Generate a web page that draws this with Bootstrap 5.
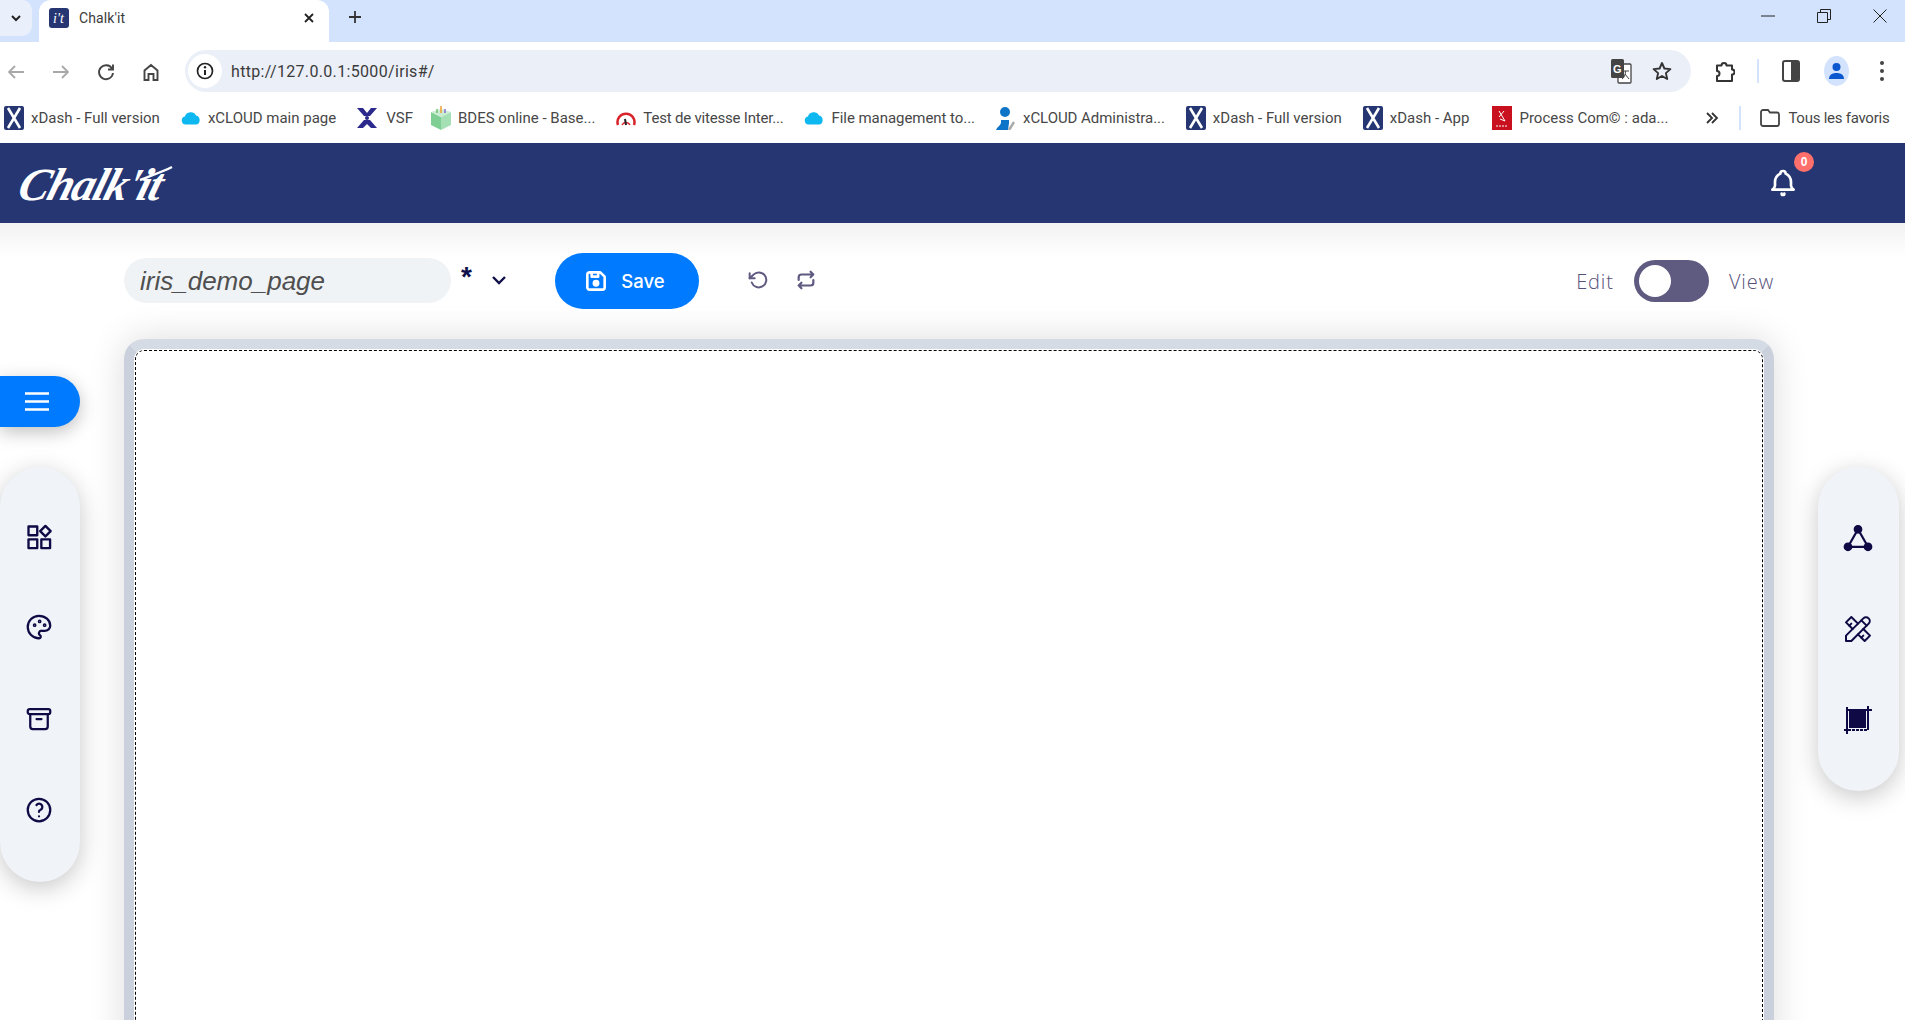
<!DOCTYPE html>
<html lang="en">
<head>
  <meta charset="UTF-8">
  <meta name="viewport" content="width=device-width, initial-scale=1.0">
  <title>Chalk'it</title>
  <link href="https://cdn.jsdelivr.net/npm/bootstrap@5.3.3/dist/css/bootstrap.min.css" rel="stylesheet">
  <style>
    html, body { height: 100%; overflow: hidden; background: #fff; }
    body { font-family: "Liberation Sans", sans-serif; }
    .page-root { height: 1020px; overflow: hidden; }

    /* browser chrome */
    .chrome-tabs { height: 42px; background: #d3e3fd; color: #3c3c3c; }
    .tab-list-btn { width: 32px; height: 36px; background: #e9f0fc; border-radius: 0 10px 10px 0; }
    .browser-tab { width: 290px; height: 42px; margin-left: 7px; padding: 0 14px 7px 10px; background: #fff; border-radius: 12px 12px 0 0; font: 14px Roboto, sans-serif; }
    .tab-title { margin-left: 10px; letter-spacing: .1px; }
    .new-tab { margin: 5px 0 0 18px; }
    .win-btns { gap: 42px; padding: 9px 18px 0 0; }
    .chrome-toolbar { height: 50px; padding: 8px 0 0 6px; background: #fff; }
    .nav-icons { width: 179px; gap: 25px; padding-left: 0; }
    .addr-bar { width: 1506px; height: 42px; background: #ebeff8; border-radius: 21px; padding: 0 19px 0 3px; font: 16px Roboto, sans-serif; color: #3b3b3b; }
    .site-info { width: 34px; height: 34px; background: #fff; border-radius: 50%; }
    .addr-url { margin-left: 9px; letter-spacing: .33px; }
    .addr-tools { gap: 20px; }
    .tool-icons { margin: 6px 0 0 24px; }
    .chrome-sep { width: 2px; height: 24px; background: #d3e3fd; }
    .tool-sep { margin: 0 23px 0 22px; }
    .profile-dot { width: 25px; height: 30px; margin: 0 30px 0 24px; background: #d3e3fd; border-radius: 50%; }
    .chrome-bookmarks { height: 51px; padding-left: 4px; background: #fff; font: 15px Roboto, sans-serif; color: #474747; white-space: nowrap; }
    .bm-item { gap: 7px; margin-right: 21px; }
    .bm-short { gap: 9px; margin-right: 18px; }
    .bm-wide { margin-right: 23px; }
    .bm-tight { letter-spacing: -.2px; }
    .bm-tighter { letter-spacing: -.05px; }
    .bm-more { margin-left: 16px; }
    .bm-sep { margin: 0 19px 0 20px; }
    .bm-all { gap: 8px; letter-spacing: -.25px; }

    /* app header */
    .app-header { height: 80px; padding: 0 !important; background: #253672; }
    .app-logo { margin-left: 20px; padding-top: 4px; position: relative; }
    .logo-text { font: italic 700 46px "Liberation Serif", serif; color: #fff; letter-spacing: -1.5px; transform: skewX(-16deg); display: inline-block; line-height: 1; }
    .logo-bar { position: absolute; left: 118px; top: 6px; }
    .bell-wrap { position: relative; margin-right: 106px; width: 32px; height: 32px; }
    .bell-count { position: absolute; top: -15px; left: 27px; width: 20px; height: 20px; padding: 0; border-radius: 50%; background: #ff6f6c; font: 700 12px/20px "Liberation Sans", sans-serif; color: #fff; }

    /* app body */
    .app-body { background: linear-gradient(#f2f2f2, #fff 34px); height: 777px; }
    .page-toolbar { height: 116px; padding: 30px 0 0 124px; }
    .page-name { width: 327px; height: 45px; margin-top: 5px; padding: 2px 16px 0; border: 0; border-radius: 23px; background: #f0f3f6; font: italic 26px "Liberation Sans", sans-serif; color: #4f4f4f; box-shadow: none !important; }
    .page-name:focus { background: #f0f3f6; color: #4f4f4f; }
    .dirty-star { margin: 0 0 0 10px; width: 20px; font: 700 28px/28px "Liberation Sans", sans-serif; color: #10104a; align-self: flex-start; padding-top: 10px; }
    .page-menu { margin: 14px 0 0 10px; }
    .save-btn { width: 144px; height: 56px; margin-left: 48px; padding: 0 6px 0 0; gap: 12px; border: 0; background: #007bff; font: 500 18.5px Inter, sans-serif; color: #fff; }
    .undo-redo { margin: 16px 0 0 49px; gap: 27px; color: #5f5a80; }
    .mode-switch { margin: 7px 131px 0 auto; font: 300 20px "Open Sans", sans-serif; color: #56517a; gap: 20px; letter-spacing: .9px; }
    .mode-track { width: 75px; height: 42px; border-radius: 21px; background: #5f5a80; padding: 5px; }
    .mode-knob { width: 32px; height: 32px; border-radius: 50%; background: #fff; }

    .work-row { height: 700px; }
    .left-rail { width: 124px; flex: none; }
    .right-rail { width: 131px; flex: none; padding: 128px 6px 0 44px; }
    .menu-pill { width: 80px; height: 51px; margin-top: 37px; padding-right: 7px; border-radius: 0 26px 26px 0; background: #007bff; box-shadow: 0 5px 18px rgba(0, 0, 0, .25); }
    .tool-panel { background: #f0f3f7; border-radius: 40px; box-shadow: 0 6px 24px rgba(0, 0, 0, .22); color: #0f0a45; }
    .panel-left { width: 80px; height: 415px; margin-top: 40px; padding: 56px 2px 57px 0; }
    .panel-right { width: 81px; height: 324px; padding: 56px 2px 56px 0; }
    .canvas-frame { width: 1650px; height: 760px; flex: none; border: 10px solid #d5dbe4; border-left-color: #cbd1dc; border-right-color: #cbd1dc; border-radius: 20px 20px 0 0; background: #fff; box-shadow: 0 0 36px rgba(0, 0, 0, .14); }
    .canvas-inner { height: 100%; margin: 1px 1px 0 1px; border: 1px dashed #000; border-bottom: 0; border-radius: 9px 9px 0 0; background: #fff; }
  </style>
</head>
<body>
  <svg width="0" height="0" class="d-block">
    <symbol id="xlogo" viewBox="0 0 20 24">
      <rect width="20" height="24" rx="2" fill="#253672"/>
      <path d="M4 2l12 20M16 2L4 22" stroke="#fff" stroke-width="2.6" fill="none"/>
    </symbol>
    <symbol id="cloud" viewBox="0 0 20 14">
      <path d="M4.5 13.5a4 4 0 0 1-.6-7.9A6 6 0 0 1 15 4.6a4.6 4.6 0 0 1 .4 8.9z" fill="#0db7f0"/>
    </symbol>
  </svg>

  <div class="page-root">
    <!-- browser tabs -->
    <div class="chrome-tabs d-flex align-items-start">
      <div class="tab-list-btn d-flex align-items-center justify-content-center">
        <svg width="12" height="12" viewBox="0 0 12 12"><path d="M2 4l4 4 4-4" fill="none" stroke="#222" stroke-width="2"/></svg>
      </div>
      <div class="browser-tab d-flex align-items-center">
        <svg width="20" height="20" viewBox="0 0 20 20">
          <rect width="20" height="20" rx="3" fill="#253672"/>
          <text x="4" y="15" font-family="Liberation Serif" font-style="italic" font-size="14" fill="#fff">i't</text>
        </svg>
        <span class="tab-title flex-grow-1">Chalk'it</span>
        <svg width="12" height="12" viewBox="0 0 12 12"><path d="M2 2l8 8M10 2l-8 8" stroke="#222" stroke-width="1.8"/></svg>
      </div>
      <svg class="new-tab" width="16" height="24" viewBox="0 0 16 24"><path d="M8 6v12M2 12h12" stroke="#333" stroke-width="1.8"/></svg>
      <div class="win-btns d-flex align-items-center ms-auto">
        <svg width="14" height="14" viewBox="0 0 14 14"><path d="M0 7h14" stroke="#222"/></svg>
        <svg width="14" height="14" viewBox="0 0 14 14"><path d="M.5 3.5h10v10H.5zM3.5 3V.5h10v10H11" fill="none" stroke="#222"/></svg>
        <svg width="14" height="14" viewBox="0 0 14 14"><path d="M.5.5l13 13M13.5.5l-13 13" stroke="#222"/></svg>
      </div>
    </div>

    <!-- address bar -->
    <div class="chrome-toolbar d-flex align-items-start">
      <div class="nav-icons d-flex align-items-center mt-2 pt-1">
        <svg width="20" height="20" viewBox="0 0 20 20"><path d="M18 10H3M9 4l-6 6 6 6" fill="none" stroke="#a8a8a8" stroke-width="1.8"/></svg>
        <svg width="20" height="20" viewBox="0 0 20 20"><path d="M2 10h15M11 4l6 6-6 6" fill="none" stroke="#a8a8a8" stroke-width="1.8"/></svg>
        <svg width="20" height="20" viewBox="0 0 20 20"><path d="M16 6.5A7 7 0 1 0 17 11M17 2.5v5h-5" fill="none" stroke="#444" stroke-width="1.9"/></svg>
        <svg width="20" height="20" viewBox="0 0 20 20"><path d="M3.5 18V8.500L10 3l6.500 5.500V18H12.500v-6h-5v6z" fill="none" stroke="#444" stroke-width="1.9"/></svg>
      </div>
      <div class="addr-bar d-flex align-items-center">
        <span class="site-info d-flex align-items-center justify-content-center">
          <svg width="18" height="18" viewBox="0 0 18 18"><circle cx="9" cy="9" r="7.500" fill="none" stroke="#222" stroke-width="1.700"/><path d="M9 8v5" stroke="#222" stroke-width="2"/><circle cx="9" cy="5.300" r="1.200" fill="#222"/></svg>
        </span>
        <span class="addr-url flex-grow-1">http://127.0.0.1:5000/iris#/</span>
        <span class="addr-tools d-flex align-items-center">
          <svg width="22" height="26" viewBox="0 0 22 26">
            <rect x="8" y="6" width="13" height="19" rx="1" fill="#fff" stroke="#444" stroke-width="1.300"/>
            <rect x="1" y="1" width="13" height="19" rx="1.500" fill="#444"/>
            <text x="3" y="15" font-family="Liberation Sans" font-weight="700" font-size="11" fill="#fff">G</text>
            <path d="M12 13h7M15.500 13c0 4-1.500 7-3.500 8M15 16l4 5" fill="none" stroke="#444"/>
          </svg>
          <svg width="20" height="20" viewBox="0 0 20 20"><path d="M10 2l2.400 5.500 6 .6-4.500 4 1.300 5.900L10 15l-5.200 3 1.300-5.900-4.500-4 6-.6z" fill="none" stroke="#333" stroke-width="1.900" stroke-linejoin="round"/></svg>
        </span>
      </div>
      <div class="tool-icons d-flex align-items-center">
        <svg width="20" height="26" viewBox="0 0 20 26"><path d="M2 7.500h4.500a2.500 2.500 0 0 1 5 0H17v4a2.500 2.500 0 0 1 0 5V23H2v-5a2.500 2.500 0 0 0 0-5z" fill="none" stroke="#333" stroke-width="2" stroke-linejoin="round"/></svg>
        <span class="chrome-sep tool-sep"></span>
        <svg width="18" height="22" viewBox="0 0 18 22"><rect x="1" y="1" width="16" height="20" rx="2" fill="none" stroke="#444" stroke-width="2"/><rect x="9" y="1" width="8" height="20" rx="1" fill="#444"/></svg>
        <span class="profile-dot d-flex align-items-center justify-content-center">
          <svg width="17" height="18" viewBox="0 0 17 18"><circle cx="8.500" cy="5" r="4" fill="#0b57d0"/><path d="M1 17c0-4 3-6 7.500-6s7.500 2 7.500 6z" fill="#0b57d0"/></svg>
        </span>
        <svg width="6" height="22" viewBox="0 0 6 22"><circle cx="3" cy="3" r="2" fill="#444"/><circle cx="3" cy="11" r="2" fill="#444"/><circle cx="3" cy="19" r="2" fill="#444"/></svg>
      </div>
    </div>

    <!-- bookmarks -->
    <div class="chrome-bookmarks d-flex align-items-center">
      <div class="bm-item d-flex align-items-center"><svg width="20" height="24"><use href="#xlogo"/></svg><span>xDash - Full version</span></div>
      <div class="bm-item d-flex align-items-center"><svg width="20" height="14"><use href="#cloud"/></svg><span>xCLOUD main page</span></div>
      <div class="bm-item bm-short d-flex align-items-center">
        <svg width="20" height="20" viewBox="0 0 20 20" fill="#2b2a8c"><path d="M0 0l6 0 4 5 4-5h6l-7 8H7zM0 20l6 0 4-4 4 4h6l-7-8H7z"/><circle cx="10" cy="10" r="2"/></svg>
        <span>VSF</span></div>
      <div class="bm-item d-flex align-items-center">
        <svg width="20" height="24" viewBox="0 0 20 24">
          <path d="M0 6l10 5v13L0 19z" fill="#7fcf95"/><path d="M20 6l-10 5v13l10-5z" fill="#a5e0b5"/><path d="M0 6l10-3 10 3-10 5z" fill="#c9ecd2"/>
          <path d="M6 7V3" stroke="#6fbf6f" stroke-width="1.500"/><path d="M10 7V0" stroke="#f0a030" stroke-width="1.500"/><path d="M14 7V3" stroke="#8a6fd0" stroke-width="1.500"/>
        </svg>
        <span>BDES online - Base...</span></div>
      <div class="bm-item bm-tight d-flex align-items-center">
        <svg width="20" height="16" viewBox="0 0 20 16"><path d="M2 15a8.500 8.500 0 1 1 16 0" fill="none" stroke="#d8232a" stroke-width="2.500"/><path d="M6 15a4.500 4.500 0 0 1 8 0" fill="none" stroke="#d8232a" stroke-width="1.500"/><path d="M10 15l-1-6" stroke="#222" stroke-width="2"/></svg>
        <span>Test de vitesse Inter...</span></div>
      <div class="bm-item bm-tighter d-flex align-items-center"><svg width="20" height="14"><use href="#cloud"/></svg><span>File management to...</span></div>
      <div class="bm-item bm-tighter d-flex align-items-center">
        <svg width="20" height="24" viewBox="0 0 20 24"><circle cx="9" cy="6" r="5" fill="#0d74c8"/><path d="M0 24c1-3 4-4 5-7v-3h8v3l-1 7z" fill="#0d74c8"/><path d="M13 24l5-8" stroke="#aaa" stroke-width="2.500"/></svg>
        <span>xCLOUD Administra...</span></div>
      <div class="bm-item d-flex align-items-center"><svg width="20" height="24"><use href="#xlogo"/></svg><span>xDash - Full version</span></div>
      <div class="bm-item bm-wide d-flex align-items-center"><svg width="20" height="24"><use href="#xlogo"/></svg><span>xDash - App</span></div>
      <div class="bm-item d-flex align-items-center">
        <svg width="20" height="24" viewBox="0 0 20 24"><rect width="20" height="24" fill="#c8101e"/><path d="M7 5l6 10M12 5l-5 6M8 13l5 2" stroke="#fff" fill="none"/><path d="M4 20h12" stroke="#fff" stroke-dasharray="2 1"/></svg>
        <span>Process Com© : ada...</span></div>
      <svg class="bm-more" width="14" height="12" viewBox="0 0 14 12"><path d="M2 1l5 5-5 5M7 1l5 5-5 5" fill="none" stroke="#333" stroke-width="1.800"/></svg>
      <span class="chrome-sep bm-sep"></span>
      <div class="bm-all d-flex align-items-center">
        <svg width="20" height="18" viewBox="0 0 20 18"><path d="M1 3a2 2 0 0 1 2-2h5l2 2.500h7a2 2 0 0 1 2 2V15a2 2 0 0 1-2 2H3a2 2 0 0 1-2-2z" fill="none" stroke="#444" stroke-width="1.800"/></svg>
        <span>Tous les favoris</span></div>
    </div>

    <!-- app header -->
    <nav class="navbar app-header">
      <div class="app-logo">
        <span class="logo-text">Chalk'it</span>
        <svg class="logo-bar" width="36" height="20" viewBox="0 0 36 20"><path d="M2 16C12 12 24 8 34 3" stroke="#fff" stroke-width="2.500" fill="none"/></svg>
      </div>
      <div class="bell-wrap">
        <svg class="d-block" width="32" height="32" viewBox="0 0 24 24" fill="none" stroke="#fff" stroke-width="2" stroke-linecap="round" stroke-linejoin="round"><path d="M10 5a2 2 0 1 1 4 0a7 7 0 0 1 4 6v3a4 4 0 0 0 2 3h-16a4 4 0 0 0 2 -3v-3a7 7 0 0 1 4 -6"/><path d="M11 20a1 1 0 0 0 2 0"/></svg>
        <span class="badge bell-count">0</span>
      </div>
    </nav>

    <div class="app-body">
      <div class="page-toolbar d-flex align-items-start">
        <input class="form-control page-name" type="text" value="iris_demo_page">
        <span class="dirty-star">*</span>
        <span class="page-menu">
          <svg width="16" height="10" viewBox="0 0 16 10"><path d="M2 2l6 6 6-6" fill="none" stroke="#10104a" stroke-width="2.400"/></svg>
        </span>
        <button class="btn rounded-pill save-btn d-flex align-items-center justify-content-center" type="button">
          <svg width="26" height="26" viewBox="0 0 24 24" fill="none" stroke="#fff" stroke-width="2.400" stroke-linecap="round" stroke-linejoin="round"><path d="M6 4h10l4 4v10a2 2 0 0 1 -2 2h-12a2 2 0 0 1 -2 -2v-12a2 2 0 0 1 2 -2"/><circle cx="12" cy="14" r="2" fill="#fff"/><path d="M14 4v4h-6v-4"/></svg>
          <span>Save</span>
        </button>
        <div class="undo-redo d-flex align-items-center">
          <svg width="20" height="20" viewBox="0 0 24 24" fill="none" stroke="currentColor" stroke-width="2.400" stroke-linecap="round" stroke-linejoin="round"><path d="M2 4v6h6"/><path d="M4.500 15a9 9 0 1 0 2-9.400L2 10"/></svg>
          <svg width="22" height="22" viewBox="0 0 24 24" fill="none" stroke="currentColor" stroke-width="2.400" stroke-linecap="round" stroke-linejoin="round"><path d="M4 12v-3a3 3 0 0 1 3 -3h13m-3 -3l3 3l-3 3"/><path d="M20 12v3a3 3 0 0 1 -3 3h-13m3 3l-3 -3l3 -3"/></svg>
        </div>
        <div class="mode-switch d-flex align-items-center">
          <span>Edit</span>
          <div class="mode-track"><div class="mode-knob"></div></div>
          <span>View</span>
        </div>
      </div>

      <div class="work-row d-flex">
        <div class="left-rail">
          <div class="menu-pill d-flex align-items-center justify-content-center">
            <svg width="24" height="19" viewBox="0 0 24 19"><path d="M0 1.500h24M0 9.500h24M0 17.500h24" stroke="#fff" stroke-width="2.400"/></svg>
          </div>
          <div class="tool-panel panel-left d-flex flex-column align-items-center justify-content-between">
            <svg width="28" height="28" viewBox="0 0 24 24" fill="none" stroke="currentColor" stroke-width="2" stroke-linejoin="round"><rect x="3" y="3" width="7.500" height="7.500"/><path d="M17.500 2.500l4.500 4.500-4.500 4.500-4.500-4.500z"/><rect x="3" y="14" width="7.500" height="7.500"/><rect x="14" y="14" width="7.500" height="7.500"/></svg>
            <svg width="30" height="30" viewBox="0 0 24 24" fill="none" stroke="currentColor" stroke-width="1.800" stroke-linecap="round" stroke-linejoin="round"><path d="M12 21a9 9 0 0 1 0 -18c4.970 0 9 3.582 9 8c0 1.060 -.474 2.078 -1.318 2.828c-.844 .75 -1.989 1.172 -3.182 1.172h-2.500a2 2 0 0 0 -1 3.750a1.300 1.300 0 0 1 -1 2.250"/><circle cx="8.500" cy="10.500" r=".6"/><circle cx="12.500" cy="7.500" r=".6"/><circle cx="16.500" cy="10.500" r=".6"/></svg>
            <svg width="30" height="30" viewBox="0 0 24 24" fill="none" stroke="currentColor" stroke-width="1.800" stroke-linecap="round" stroke-linejoin="round"><rect x="3" y="4" width="18" height="4" rx="1.500"/><path d="M5 8v10a2 2 0 0 0 2 2h10a2 2 0 0 0 2 -2v-10"/><path d="M10 12h4"/></svg>
            <svg width="30" height="30" viewBox="0 0 24 24" fill="none" stroke="currentColor" stroke-width="1.800" stroke-linecap="round" stroke-linejoin="round"><circle cx="12" cy="12" r="9"/><path d="M12 17v.01"/><path d="M12 13.500a1.500 1.500 0 0 1 1 -1.500a2.600 2.600 0 1 0 -3 -4"/></svg>
          </div>
        </div>

        <div class="canvas-frame">
          <div class="canvas-inner"></div>
        </div>

        <div class="right-rail">
          <div class="tool-panel panel-right d-flex flex-column align-items-center justify-content-between">
            <svg width="30" height="30" viewBox="0 0 24 24" fill="currentColor" stroke="currentColor"><path d="M12 5L4 19h16z" fill="none" stroke-width="1.800"/><circle cx="12" cy="5" r="3"/><circle cx="4" cy="19" r="3"/><circle cx="20" cy="19" r="3"/></svg>
            <svg width="32" height="32" viewBox="0 0 24 24" fill="none" stroke="currentColor" stroke-width="1.500" stroke-linecap="round" stroke-linejoin="round"><path d="M3 21h4l13 -13a1.500 1.500 0 0 0 -4 -4l-13 13v4"/><path d="M14.500 5.500l4 4"/><path d="M12 8l-5 -5l-4 4l5 5"/><path d="M7 8l-1.500 1.500"/><path d="M16 12l5 5l-4 4l-5 -5"/><path d="M16 17l-1.500 1.500"/></svg>
            <svg width="30" height="30" viewBox="0 0 30 30" fill="none" stroke="currentColor" stroke-width="2"><rect x="7" y="7" width="15" height="15" fill="currentColor"/><path d="M25 1v24M29 5H4M4 2v24"/><path d="M1 25h24" stroke-dasharray="3 1"/><path d="M4 26v3" /></svg>
          </div>
        </div>
      </div>
    </div>
  </div>

  <script src="https://cdn.jsdelivr.net/npm/bootstrap@5.3.3/dist/js/bootstrap.bundle.min.js"></script>
</body>
</html>
